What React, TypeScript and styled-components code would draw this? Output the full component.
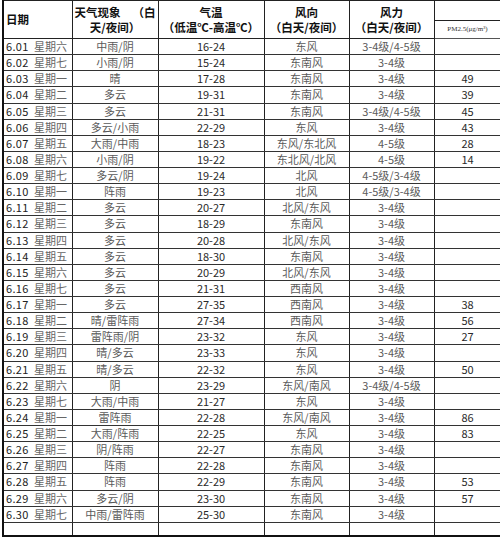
import styled, { createGlobalStyle } from 'styled-components';

const GlobalStyle = createGlobalStyle`
    html, body {
        margin: 0;
        padding: 0;
        background: #fff;
    }
    body {
        font-family: "Noto Sans CJK SC", "Liberation Sans", sans-serif;
    }
`;

type Day = {
    date: string;
    week: string;
    weather: string;
    temp: string;
    wind: string;
    force: string;
    pm?: string;
};

const days: Day[] = [
    { date: '6.01', week: '星期六', weather: '中雨/阴', temp: '16-24', wind: '东风', force: '3-4级/4-5级' },
    { date: '6.02', week: '星期七', weather: '小雨/阴', temp: '15-24', wind: '东南风', force: '3-4级' },
    { date: '6.03', week: '星期一', weather: '晴', temp: '17-28', wind: '东南风', force: '3-4级', pm: '49' },
    { date: '6.04', week: '星期二', weather: '多云', temp: '19-31', wind: '东南风', force: '3-4级', pm: '39' },
    { date: '6.05', week: '星期三', weather: '多云', temp: '21-31', wind: '东南风', force: '3-4级/4-5级', pm: '45' },
    { date: '6.06', week: '星期四', weather: '多云/小雨', temp: '22-29', wind: '东风', force: '3-4级', pm: '43' },
    { date: '6.07', week: '星期五', weather: '大雨/中雨', temp: '18-23', wind: '东风/东北风', force: '4-5级', pm: '28' },
    { date: '6.08', week: '星期六', weather: '小雨/阴', temp: '19-22', wind: '东北风/北风', force: '4-5级', pm: '14' },
    { date: '6.09', week: '星期七', weather: '多云/阴', temp: '19-24', wind: '北风', force: '4-5级/3-4级' },
    { date: '6.10', week: '星期一', weather: '阵雨', temp: '19-23', wind: '北风', force: '4-5级/3-4级' },
    { date: '6.11', week: '星期二', weather: '多云', temp: '20-27', wind: '北风/东风', force: '3-4级' },
    { date: '6.12', week: '星期三', weather: '多云', temp: '18-29', wind: '东南风', force: '3-4级' },
    { date: '6.13', week: '星期四', weather: '多云', temp: '20-28', wind: '北风/东风', force: '3-4级' },
    { date: '6.14', week: '星期五', weather: '多云', temp: '18-30', wind: '东南风', force: '3-4级' },
    { date: '6.15', week: '星期六', weather: '多云', temp: '20-29', wind: '北风/东风', force: '3-4级' },
    { date: '6.16', week: '星期七', weather: '多云', temp: '21-31', wind: '西南风', force: '3-4级' },
    { date: '6.17', week: '星期一', weather: '多云', temp: '27-35', wind: '西南风', force: '3-4级', pm: '38' },
    { date: '6.18', week: '星期二', weather: '晴/雷阵雨', temp: '27-34', wind: '西南风', force: '3-4级', pm: '56' },
    { date: '6.19', week: '星期三', weather: '雷阵雨/阴', temp: '23-32', wind: '东风', force: '3-4级', pm: '27' },
    { date: '6.20', week: '星期四', weather: '晴/多云', temp: '23-33', wind: '东风', force: '3-4级' },
    { date: '6.21', week: '星期五', weather: '晴/多云', temp: '22-32', wind: '东风', force: '3-4级', pm: '50' },
    { date: '6.22', week: '星期六', weather: '阴', temp: '23-29', wind: '东风/南风', force: '3-4级/4-5级' },
    { date: '6.23', week: '星期七', weather: '大雨/中雨', temp: '21-27', wind: '东风', force: '3-4级' },
    { date: '6.24', week: '星期一', weather: '雷阵雨', temp: '22-28', wind: '东风/南风', force: '3-4级', pm: '86' },
    { date: '6.25', week: '星期二', weather: '大雨/阵雨', temp: '22-25', wind: '东风', force: '3-4级', pm: '83' },
    { date: '6.26', week: '星期三', weather: '阴/阵雨', temp: '22-27', wind: '东南风', force: '3-4级' },
    { date: '6.27', week: '星期四', weather: '阵雨', temp: '22-28', wind: '东南风', force: '3-4级' },
    { date: '6.28', week: '星期五', weather: '阵雨', temp: '22-29', wind: '东南风', force: '3-4级', pm: '53' },
    { date: '6.29', week: '星期六', weather: '多云/阴', temp: '23-30', wind: '东南风', force: '3-4级', pm: '57' },
    { date: '6.30', week: '星期七', weather: '中雨/雷阵雨', temp: '25-30', wind: '东南风', force: '3-4级' }
];

const Sheet = styled.table`
    margin-left: 2px;
    width: 498px;
    table-layout: fixed;
    border-collapse: collapse;
    border-left: 2px solid #111;
    border-top: 1px solid #222;
    border-bottom: 2px solid #111;
    font-size: 11px;
    line-height: 1;
`;

const HeadCell = styled.th<{ $align?: 'left' | 'center' }>`
    padding: 0 2px;
    border: 1px solid #222;
    font-weight: bold;
    color: #111;
    text-align: ${p => p.$align ?? 'center'};
    vertical-align: middle;
    line-height: 15px;
    font-size: 11.5px;
`;

const PmHead = styled.th`
    padding: 0;
    border: 1px solid #555;
    font-family: "Liberation Serif", "Noto Sans CJK SC", serif;
    font-weight: normal;
    font-size: 7px;
    color: #333;
    white-space: nowrap;
    text-align: center;
    overflow: hidden;
`;

const SpreadLine = styled.span`
    display: flex;
    justify-content: space-between;
`;

const Row = styled.tr<{ $h: number }>`
    height: ${p => p.$h}px;
`;

const Cell = styled.td<{ $tone?: 'dark' | 'grey' }>`
    padding: 0;
    border-left: 1px solid #222;
    border-right: 1px solid #222;
    border-bottom: 1px solid #333;
    text-align: center;
    vertical-align: middle;
    white-space: nowrap;
    overflow: hidden;
    color: ${p => (p.$tone === 'dark' ? '#2a2a2a' : '#5a5a5a')};
`;

const DateCell = styled(Cell)`
    text-align: left;
    padding-left: 2px;
`;

const DateNum = styled.span`
    display: inline-block;
    width: 28px;
    color: #222;
    letter-spacing: 0.3px;
`;

const Week = styled.span`
    color: #666;
`;

export default function App() {
    return (
        <>
            <GlobalStyle />
            <Sheet>
                <colgroup>
                    <col style={{ width: 69 }} />
                    <col style={{ width: 86 }} />
                    <col style={{ width: 106 }} />
                    <col style={{ width: 85 }} />
                    <col style={{ width: 85 }} />
                    <col style={{ width: 67 }} />
                </colgroup>
                <thead>
                    <Row $h={20}>
                        <HeadCell rowSpan={2} $align="left">日期</HeadCell>
                        <HeadCell rowSpan={2}>
                            <SpreadLine>
                                <span>天气现象</span>
                                <span>（白</span>
                            </SpreadLine>
                            天/夜间）
                        </HeadCell>
                        <HeadCell rowSpan={2}>
                            气温
                            <br />
                            （低温℃-高温℃）
                        </HeadCell>
                        <HeadCell rowSpan={2}>
                            风向
                            <br />
                            （白天/夜间）
                        </HeadCell>
                        <HeadCell rowSpan={2}>
                            风力
                            <br />
                            （白天/夜间）
                        </HeadCell>
                        <HeadCell />
                    </Row>
                    <Row $h={18}>
                        <PmHead>PM2.5(μg/m³)</PmHead>
                    </Row>
                </thead>
                <tbody>
                    {days.map(d => (
                        <Row key={d.date} $h={16.13}>
                            <DateCell>
                                <DateNum>{d.date}</DateNum>
                                <Week>{d.week}</Week>
                            </DateCell>
                            <Cell>{d.weather}</Cell>
                            <Cell $tone="dark">{d.temp}</Cell>
                            <Cell>{d.wind}</Cell>
                            <Cell>{d.force}</Cell>
                            <Cell $tone="dark">{d.pm ?? ''}</Cell>
                        </Row>
                    ))}
                    <Row $h={14}>
                        <Cell />
                        <Cell />
                        <Cell />
                        <Cell />
                        <Cell />
                        <Cell />
                    </Row>
                </tbody>
            </Sheet>
        </>
    );
}
